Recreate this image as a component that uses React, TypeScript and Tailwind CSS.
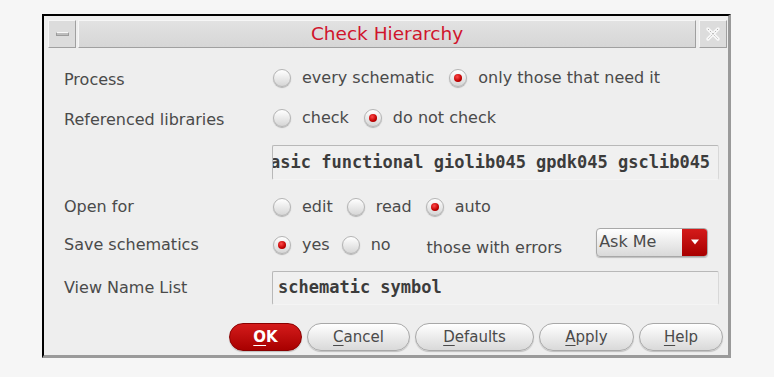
const sans = { fontFamily: '"DejaVu Sans", sans-serif' };

function Radio({ checked, label, gap = "mr-[15px]" }: { checked?: boolean; label: string; gap?: string }) {
  return (
    <div className={`flex items-center ${gap}`}>
      <span className="w-[18px] h-[18px] rounded-full border border-[#b4b4b4] bg-gradient-to-b from-white to-[#d6d6d6] shadow-[0_1px_1px_rgba(0,0,0,0.25)] flex items-center justify-center mr-[11px]">
        {checked && (
          <span className="w-[8px] h-[8px] rounded-full bg-[radial-gradient(circle_at_40%_35%,#ff4a4a,#c00000_60%,#8a0000)]" />
        )}
      </span>
      <span className="text-[16px] text-[#4a4a4a]">{label}</span>
    </div>
  );
}

function Btn({ u, rest, w, primary }: { u: string; rest: string; w: string; primary?: boolean }) {
  const cls = primary
    ? "bg-gradient-to-b from-[#d41a1a] to-[#a80000] border-[#8a0000] text-white font-bold"
    : "bg-gradient-to-b from-white to-[#d9d9d9] border-[#a8a8a8] text-[#4a4a4a]";
  return (
    <button className={`${w} h-[28px] rounded-full border text-[15px] flex items-center justify-center shadow-[0_1px_1px_rgba(0,0,0,0.2)] ${cls}`}>
      <span>
        <span className="underline underline-offset-[3px]">{u}</span>
        {rest}
      </span>
    </button>
  );
}

function Field({ text, h, shift }: { text: string; h: string; shift: string }) {
  return (
    <div className={`w-[447px] ${h} border border-[#b8b8b8] border-b-[#f4f4f4] border-r-[#d8d8d8] rounded-[2px] bg-[#f0f0f0] flex items-center overflow-hidden whitespace-nowrap`}>
      <span
        className={`text-[17px] font-bold text-[#3c3c3c] ${shift}`}
        style={{ fontFamily: '"DejaVu Sans Mono", monospace' }}
      >
        {text}
      </span>
    </div>
  );
}

export default function App() {
  return (
    <div className="w-[774px] h-[377px] bg-[#f6f6f6] pt-[14px] pl-[42px]" style={sans}>
      <div className="w-[689px] h-[344px] border-l-2 border-t-2 border-black border-r-[3px] border-b-[3px] border-r-[#9a9a9a] border-b-[#9a9a9a] bg-[#eeeeee] pt-[4px] pl-[4px] pr-[1px] flex flex-col">
        {/* title bar */}
        <div className="flex h-[28px] gap-[2px]">
          <div className="w-[28px] h-full bg-[#dcdcdc] border border-[#f6f6f6] border-r-[#a0a0a0] border-b-[#a0a0a0] flex items-center justify-center">
            <span className="w-[13px] h-[4px] bg-[#bdbdbd] border border-[#9c9c9c] border-t-[#f8f8f8]" />
          </div>
          <div className="flex-1 h-full bg-gradient-to-b from-[#e2e2e2] to-[#d6d6d6] border border-[#f6f6f6] border-r-[#a0a0a0] border-b-[#a0a0a0] flex items-center justify-center">
            <span className="text-[18.5px] text-[#d0142c]">Check Hierarchy</span>
          </div>
          <div className="w-[28px] h-full bg-[#dcdcdc] border border-[#f6f6f6] border-r-[#a0a0a0] border-b-[#a0a0a0] flex items-center justify-center ml-[1px]">
            <svg width="16" height="16" viewBox="0 0 16 16">
              <path d="M3 3 L13 13 M13 3 L3 13" stroke="#f8f8f8" strokeWidth="3.5" strokeLinecap="round" />
              <path d="M3 3 L13 13 M13 3 L3 13" stroke="#b0b0b0" strokeWidth="1" strokeDasharray="1.5 1.5" />
            </svg>
          </div>
        </div>

        <div className="pl-[16px] flex flex-col">
          <div className="flex items-center h-[36px] mt-[12px]">
            <div className="w-[209px] text-[16px] text-[#4a4a4a] pt-[3px]">Process</div>
            <Radio label="every schematic" />
            <Radio checked label="only those that need it" />
          </div>
          <div className="flex items-center h-[36px] mt-[4px]">
            <div className="w-[209px] text-[16px] text-[#4a4a4a] pt-[3px]">Referenced libraries</div>
            <Radio label="check" />
            <Radio checked label="do not check" />
          </div>
          <div className="flex mt-[9px] pl-[208px]">
            <Field h="h-[35px]" shift="-ml-[3px]" text="asic functional giolib045 gpdk045 gsclib045" />
          </div>
          <div className="flex items-center h-[36px] mt-[9px]">
            <div className="w-[209px] text-[16px] text-[#4a4a4a]">Open for</div>
            <Radio label="edit" gap="mr-[14px]" />
            <Radio label="read" gap="mr-[14px]" />
            <Radio checked label="auto" />
          </div>
          <div className="flex items-center h-[36px] mt-[2px]">
            <div className="w-[209px] text-[16px] text-[#4a4a4a]">Save schematics</div>
            <Radio checked label="yes" gap="mr-[12px]" />
            <Radio label="no" gap="mr-[36px]" />
            <span className="text-[16px] text-[#4a4a4a] pt-[6px]">those with errors</span>
            <div className="ml-[34px] mb-[6px] w-[112px] h-[29px] rounded-[4px] border border-[#a8a8a8] bg-gradient-to-b from-white to-[#d9d9d9] flex overflow-hidden shadow-[0_1px_1px_rgba(0,0,0,0.2)]">
              <span className="flex-1 text-[16px] text-[#4a4a4a] pl-[2px] flex items-center">Ask Me</span>
              <span className="w-[25px] h-full bg-gradient-to-b from-[#d41a1a] to-[#a80000] flex items-center justify-center">
                <svg width="10" height="6" viewBox="0 0 10 6">
                  <path d="M1 0.5 L9 0.5 L5 5.5 Z" fill="#fff" />
                </svg>
              </span>
            </div>
          </div>
          <div className="flex items-center mt-[8px]">
            <div className="w-[208px] text-[16px] text-[#4a4a4a]">View Name List</div>
            <Field h="h-[34px]" shift="pl-[5px]" text="schematic symbol" />
          </div>
          <div className="flex justify-end gap-[5px] mt-[18px] pr-[4px]">
            <Btn primary u="O" rest="K" w="w-[73px]" />
            <Btn u="C" rest="ancel" w="w-[103px]" />
            <Btn u="D" rest="efaults" w="w-[119px]" />
            <Btn u="A" rest="pply" w="w-[95px]" />
            <Btn u="H" rest="elp" w="w-[84px]" />
          </div>
        </div>
      </div>
    </div>
  );
}
